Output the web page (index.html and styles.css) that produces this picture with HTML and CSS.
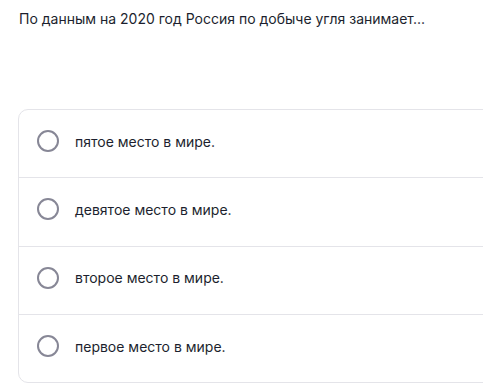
FILE: index.html
```html
<!DOCTYPE html>
<html lang="en">
<head>
    <meta charset="UTF-8">
    <title>Вопрос</title>
    <link rel="stylesheet" href="styles.css">
</head>
<body>
    <div class="question">По данным на 2020 год Россия по добыче угля занимает...</div>

    <div class="answers">
        <label class="answer">
            <span class="radio"></span>
            <span class="answer-text">пятое место в мире.</span>
        </label>
        <label class="answer">
            <span class="radio"></span>
            <span class="answer-text">девятое место в мире.</span>
        </label>
        <label class="answer">
            <span class="radio"></span>
            <span class="answer-text">второе место в мире.</span>
        </label>
        <label class="answer">
            <span class="radio"></span>
            <span class="answer-text">первое место в мире.</span>
        </label>
    </div>
</body>
</html>
```
FILE: styles.css
```css
html, body {
    overflow: hidden;
}
body {
    margin: 0;
    padding: 9px 0 0 19px;
    background-color: #fff;
    font-family: Inter, "Noto Sans", sans-serif;
    color: #1c1f2e;
}
.question {
    font-size: 14px;
    line-height: 20px;
}
.answers {
    margin-top: 80px;
    margin-left: -1px;
    margin-right: -30px;
    border: 1px solid #e4e4e9;
    border-radius: 10px;
}
.answer {
    display: flex;
    align-items: center;
    gap: 16px;
    height: 62.3px;
    padding: 0 0 5px 18px;
    font-size: 14px;
    cursor: pointer;
}
.answer + .answer {
    border-top: 1px solid #e4e4e9;
}
.radio {
    width: 18px;
    height: 18px;
    border: 2.5px solid #878796;
    border-radius: 50%;
    flex: none;
}
```
